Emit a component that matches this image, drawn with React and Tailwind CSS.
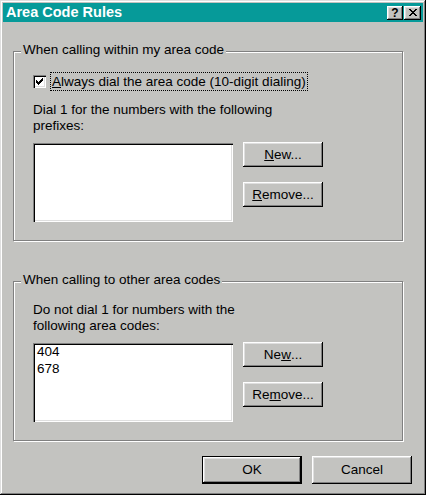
import React from 'react';

// raised 3D edge used by push buttons and caption buttons
const raised = 'shadow-[inset_-1px_-1px_#000,inset_1px_1px_#fff,inset_-2px_-2px_#808080,inset_2px_2px_#dfdfdf]';

const CheckMark = () => (
    <svg width="7" height="7" viewBox="0 0 7 7" className="block">
        {[2, 3, 4, 3, 2, 1, 0].map((y, x) => (
            <rect key={x} x={x} y={y} width="1" height="3" fill="#000" />
        ))}
    </svg>
);

const CloseGlyph = () => (
    <svg width="8" height="7" viewBox="0 0 8 7" className="block">
        {[[0, 6], [1, 5], [2, 4], [3, 3], [2, 4], [1, 5], [0, 6]].map(([a, b], y) => (
            <g key={y} fill="#000">
                <rect x={a} y={y} width="2" height="1" />
                <rect x={b} y={y} width="2" height="1" />
            </g>
        ))}
    </svg>
);

const Button = ({ children }) => (
    <button className={`w-[80px] h-[25px] flex items-center justify-center leading-[16px] bg-[#c3c3c0] text-black ${raised}`}>
        {children}
    </button>
);

const ListBox = ({ items = [] }) => (
    <div className="mt-[1px] w-[200px] h-[79px] bg-white pl-[4px] pt-[1px] leading-[16.5px] shadow-[inset_1px_1px_#808080,inset_2px_2px_#000,inset_-1px_-1px_#fff,inset_-2px_-2px_#dfdfdf]">
        {items.map((it) => (
            <div key={it}>{it}</div>
        ))}
    </div>
);

const GroupBox = ({ label, height, children }) => (
    <div className={`relative w-[390px] ${height} border border-[#808080] shadow-[inset_1px_1px_#fff,1px_1px_#fff] pl-[19px] pt-[20px]`}>
        <span className="absolute top-[-10px] left-[7px] px-[2px] leading-[16px] bg-[#c3c3c0]">{label}</span>
        {children}
    </div>
);

export default function App() {
    return (
        <div className="w-[426px] h-[495px] flex flex-col p-[3px] bg-[#c3c3c0] text-black text-[13.5px] font-['Liberation_Sans',Arial,sans-serif] shadow-[inset_-1px_-1px_#000,inset_1px_1px_#dfdfdf,inset_-2px_-2px_#808080,inset_2px_2px_#fff]">
            {/* title bar */}
            <div className="h-[19px] flex items-center justify-between bg-[#069a99] pl-[3px] pr-[2px]">
                <span className="text-white font-bold text-[14.5px] leading-[19px]">Area Code Rules</span>
                <div className="flex gap-[1px]">
                    <div className={`w-[16px] h-[14px] flex items-center justify-center bg-[#c3c3c0] ${raised}`}>
                        <span className="font-bold text-[12px] leading-none">?</span>
                    </div>
                    <div className={`w-[17px] h-[14px] flex items-center justify-center bg-[#c3c3c0] ${raised}`}>
                        <CloseGlyph />
                    </div>
                </div>
            </div>

            <div className="flex flex-col pl-[10px]">
                {/* within my area code */}
                <div className="mt-[29px]">
                    <GroupBox label="When calling within my area code" height="h-[190px]">
                        <div className="flex items-center">
                            <div className="w-[13px] h-[13px] bg-white flex items-center justify-center shadow-[inset_1px_1px_#808080,inset_2px_2px_#000,inset_-1px_-1px_#fff,inset_-2px_-2px_#dfdfdf]">
                                <CheckMark />
                            </div>
                            <span className="ml-[4px] border border-dotted border-black px-[1px] leading-[17px]">
                                <u>A</u>lways dial the area code (10-digit dialing)
                            </span>
                        </div>
                        <p className="mt-[11px] leading-[16px]">
                            Dial 1 for the numbers with the following
                            <br />
                            prefixes:
                        </p>
                        <div className="mt-[8px] flex items-start">
                            <ListBox />
                            <div className="ml-[10px] flex flex-col gap-[15px]">
                                <Button><u>N</u>ew...</Button>
                                <Button><u>R</u>emove...</Button>
                            </div>
                        </div>
                    </GroupBox>
                </div>

                {/* other area codes */}
                <div className="mt-[40px]">
                    <GroupBox label="When calling to other area codes" height="h-[160px]">
                        <p className="leading-[16px]">
                            Do not dial 1 for numbers with the
                            <br />
                            following area codes:
                        </p>
                        <div className="mt-[8px] flex items-start">
                            <ListBox items={['404', '678']} />
                            <div className="ml-[10px] flex flex-col gap-[15px]">
                                <Button>Ne<u>w</u>...</Button>
                                <Button>Re<u>m</u>ove...</Button>
                            </div>
                        </div>
                    </GroupBox>
                </div>

                {/* dialog buttons */}
                <div className="mt-[15px] flex justify-end gap-[10px] pr-[11px]">
                    <button className={`w-[100px] h-[28px] flex items-center justify-center leading-[16px] bg-[#c3c3c0] border border-black ${raised}`}>
                        OK
                    </button>
                    <button className={`w-[100px] h-[28px] flex items-center justify-center leading-[16px] bg-[#c3c3c0] ${raised}`}>
                        Cancel
                    </button>
                </div>
            </div>
        </div>
    );
}
